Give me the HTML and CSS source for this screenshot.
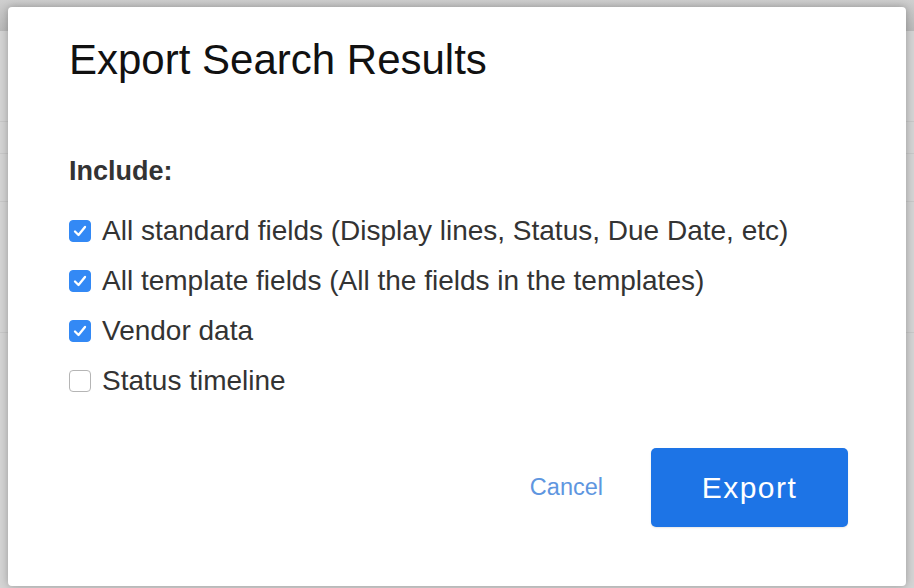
FILE: index.html
```html
<!DOCTYPE html>
<html>
<head>
<meta charset="utf-8">
<link rel="stylesheet" href="styles.css">
</head>
<body>
<div class="backdrop">
  <div class="topbar"></div>
  <div class="rows">
    <div class="row r1"></div>
    <div class="row r2"></div>
    <div class="row r3"></div>
    <div class="row r4"></div>
  </div>
</div>
<div class="modal">
  <h1 class="title">Export Search Results</h1>
  <div class="include">Include:</div>
  <ul class="options">
    <li class="option"><span class="box checked"><svg viewBox="0 0 22 22" width="22" height="22"><path d="M6 11.5 L9.5 15 L16 7" fill="none" stroke="#fff" stroke-width="2.3" stroke-linecap="round" stroke-linejoin="round"/></svg></span><span class="label">All standard fields (Display lines, Status, Due Date, etc)</span></li>
    <li class="option"><span class="box checked"><svg viewBox="0 0 22 22" width="22" height="22"><path d="M6 11.5 L9.5 15 L16 7" fill="none" stroke="#fff" stroke-width="2.3" stroke-linecap="round" stroke-linejoin="round"/></svg></span><span class="label">All template fields (All the fields in the templates)</span></li>
    <li class="option"><span class="box checked"><svg viewBox="0 0 22 22" width="22" height="22"><path d="M6 11.5 L9.5 15 L16 7" fill="none" stroke="#fff" stroke-width="2.3" stroke-linecap="round" stroke-linejoin="round"/></svg></span><span class="label">Vendor data</span></li>
    <li class="option"><span class="box"></span><span class="label">Status timeline</span></li>
  </ul>
  <div class="actions">
    <span class="cancel">Cancel</span>
    <span class="export">Export</span>
  </div>
</div>
</body>
</html>
```
FILE: styles.css
```css
html, body {
  margin: 0;
  padding: 0;
  width: 914px;
  height: 588px;
  overflow: hidden;
  font-family: "Liberation Sans", Arial, sans-serif;
}
.backdrop {
  width: 914px;
  height: 588px;
  background: #d4d4d4;
}
.topbar {
  height: 31px;
  background: linear-gradient(#cfcfcf, #b9b9b9);
}
.rows {
  display: flex;
  flex-direction: column;
}
.row { border-bottom: 1px solid #c8c8c8; }
.r1 { height: 90px; }
.r2 { height: 31px; }
.r3 { height: 47px; }
.r4 { height: 130px; }
.modal {
  position: absolute;
  left: 8px;
  top: 7px;
  width: 898px;
  height: 579px;
  background: #fff;
  border-radius: 4px;
  box-shadow: 0 0 9px rgba(0,0,0,0.28);
  box-sizing: border-box;
  padding: 0 0 0 61px;
}
.title {
  margin: 0;
  padding-top: 29px;
  font-size: 42px;
  font-weight: normal;
  color: #111;
  line-height: 48px;
}
.include {
  margin-top: 72px;
  font-size: 27px;
  font-weight: bold;
  color: #333;
  line-height: 30px;
}
.options {
  list-style: none;
  margin: 32px 0 0;
  padding: 0;
  display: flex;
  flex-direction: column;
  gap: 25px;
}
.option {
  display: flex;
  align-items: center;
  height: 25px;
}
.box {
  width: 22px;
  height: 22px;
  box-sizing: border-box;
  border-radius: 4px;
  border: 1px solid #b5b5b5;
  background: #fff;
  display: flex;
  align-items: center;
  justify-content: center;
  flex: none;
}
.box.checked {
  background: #3389f5;
  border-color: #3389f5;
}
.box svg { flex: none; }
.label {
  margin-left: 11px;
  font-size: 28px;
  color: #333;
  line-height: 25px;
}
.actions {
  display: flex;
  align-items: center;
  justify-content: flex-end;
  margin-top: 55px;
  margin-right: 58px;
}
.cancel {
  font-size: 23.5px;
  color: #5e96e0;
  margin-right: 48px;
}
.export {
  width: 197px;
  height: 79px;
  border-radius: 5px;
  background: #1d74e6;
  color: #fff;
  font-size: 30px;
  letter-spacing: 1.5px;
  display: flex;
  align-items: center;
  justify-content: center;
  box-shadow: 0 1px 2px rgba(0,0,0,0.1);
}
```
